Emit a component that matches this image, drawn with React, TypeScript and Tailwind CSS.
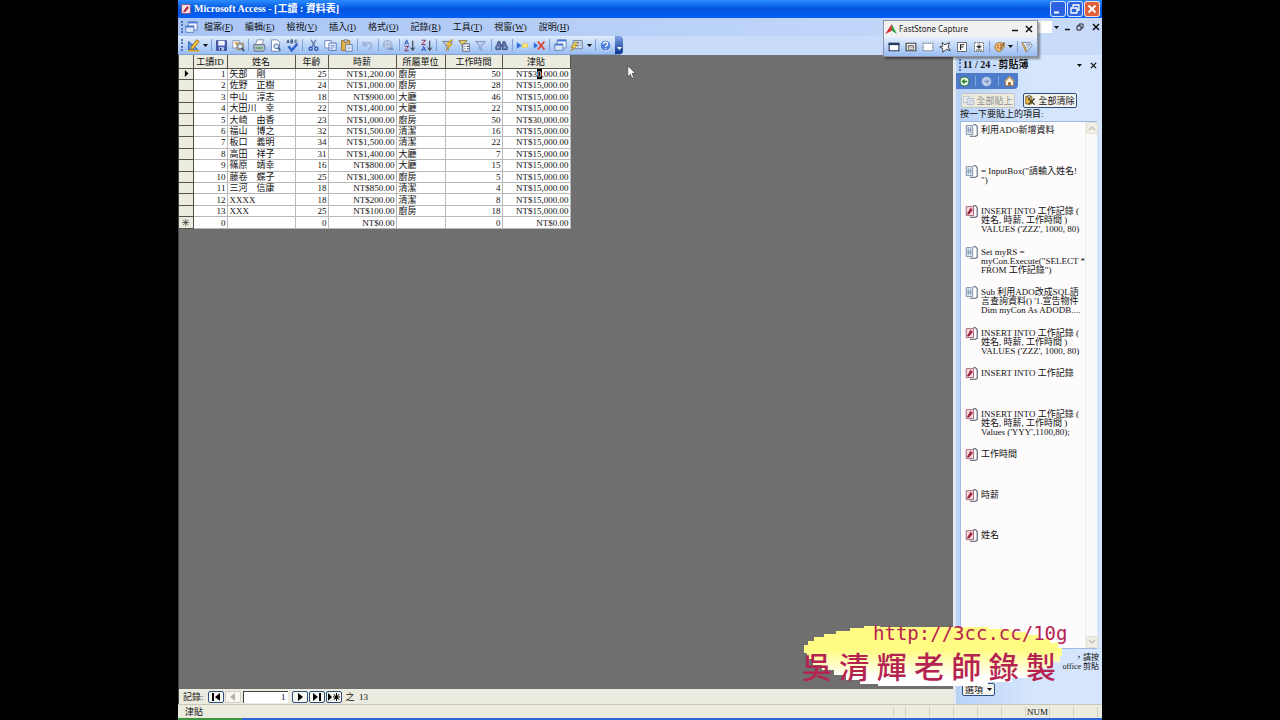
import React from 'react'
import { clsx } from 'clsx'

const MENUS = [
  ['檔案', 'F'],
  ['編輯', 'E'],
  ['檢視', 'V'],
  ['插入', 'I'],
  ['格式', 'O'],
  ['記錄', 'R'],
  ['工具', 'T'],
  ['視窗', 'W'],
  ['說明', 'H'],
]

const TOOLS = [
  'design', 'arrow', '|', 'save', 'search', '|', 'print', 'preview', 'spell', '|', 'cut', 'copy', 'paste', '|',
  'undo', '|', 'link', '|', 'asc', 'desc', '|', 'filterSel', 'filterForm', 'filter', '|', 'find', '|',
  'newRec', 'delRec', '|', 'database', 'newObj', 'arrow', '|', 'help',
]

const COLUMNS = ['工讀ID', '姓名', '年齡', '時薪', '所屬單位', '工作時間', '津貼']

const ROWS = [
  ['1', '矢部　剛', '25', 'NT$1,200.00', '廚房', '50', 'NT$30,000.00'],
  ['2', '佐野　正樹', '24', 'NT$1,000.00', '廚房', '28', 'NT$15,000.00'],
  ['3', '中山　淳志', '18', 'NT$900.00', '大廳', '46', 'NT$15,000.00'],
  ['4', '大田川　幸', '22', 'NT$1,400.00', '大廳', '22', 'NT$15,000.00'],
  ['5', '大崎　由香', '23', 'NT$1,000.00', '廚房', '50', 'NT$30,000.00'],
  ['6', '福山　博之', '32', 'NT$1,500.00', '清潔', '16', 'NT$15,000.00'],
  ['7', '板口　義明', '34', 'NT$1,500.00', '清潔', '22', 'NT$15,000.00'],
  ['8', '高田　祥子', '31', 'NT$1,400.00', '大廳', '7', 'NT$15,000.00'],
  ['9', '篠原　靖幸', '16', 'NT$800.00', '大廳', '15', 'NT$15,000.00'],
  ['10', '藤卷　蝶子', '25', 'NT$1,300.00', '廚房', '5', 'NT$15,000.00'],
  ['11', '三河　信康', '18', 'NT$850.00', '清潔', '4', 'NT$15,000.00'],
  ['12', 'XXXX', '18', 'NT$200.00', '清潔', '8', 'NT$15,000.00'],
  ['13', 'XXX', '25', 'NT$100.00', '廚房', '18', 'NT$15,000.00'],
  ['0', '', '0', 'NT$0.00', '', '0', 'NT$0.00'],
]

const CLIPS = [
  { app: 'word', lines: ['利用ADO新增資料'] },
  { app: 'word', lines: ['= InputBox("請輸入姓名!', '")'] },
  { app: 'access', lines: ['INSERT INTO 工作記錄 (', '姓名, 時薪, 工作時間 )', "VALUES ('ZZZ', 1000, 80)"] },
  { app: 'word', lines: ['Set myRS =', 'myCon.Execute("SELECT *', 'FROM 工作記錄")'] },
  { app: 'word', lines: ['Sub 利用ADO改成SQL語', "言查詢資料() '1.宣告物件", 'Dim myCon As ADODB....'] },
  { app: 'access', lines: ['INSERT INTO 工作記錄 (', '姓名, 時薪, 工作時間 )', "VALUES ('ZZZ', 1000, 80)"] },
  { app: 'access', lines: ['INSERT INTO 工作記錄'] },
  { app: 'access', lines: ['INSERT INTO 工作記錄 (', '姓名, 時薪, 工作時間 )', "Values ('YYY',1100,80);"] },
  { app: 'access', lines: ['工作時間'] },
  { app: 'access', lines: ['時薪'] },
  { app: 'access', lines: ['姓名'] },
]

const sheet = <path d="M3 1h7l3 3v11H3z" fill="#fff" stroke="#5c78a8" />
const funnel = 'M2 3h12l-5 6v5l-2-2V9z'

const ICONS: Record<string, React.ReactNode> = {
  design: (
    <>
      <path d="M2 3v11h12z" fill="#5b9ae8" stroke="#1d4fa0" />
      <path d="M4.500 9v3h3z" fill="#dcebff" />
      <path d="M5 10l7-9 3 2-7 9-3 1z" fill="#f6c643" stroke="#8a5a14" />
      <path d="M1 14.500h14" stroke="#d9a520" strokeWidth="2" />
    </>
  ),
  save: (
    <>
      <path d="M2 2h12v12H2z" fill="#4a62b8" stroke="#26367c" />
      <path d="M4 2h8v6H4z" fill="#f3f6ff" />
      <path d="M5 10h6v4H5z" fill="#c9d3ee" />
      <path d="M6 11h2v3H6z" fill="#26367c" />
    </>
  ),
  search: (
    <>
      <path d="M1 2h8v9H1z" fill="#fff" stroke="#7d8fb5" />
      <path d="M3 4h4M3 6h4" stroke="#d8912c" />
      <path d="M6 5h8v8H6z" fill="#f4dca0" stroke="#8a7a4a" />
      <circle cx="10" cy="9" r="3" fill="#dff0ff" stroke="#4a5f8c" />
      <path d="M12 11l3 4" stroke="#3c4f7c" strokeWidth="2" />
    </>
  ),
  print: (
    <>
      <path d="M5 1h8l-2 6H3z" fill="#fff" stroke="#6f7f9b" />
      <path d="M1 7h13l1 5-2 3H2l-1-3z" fill="#b9c3cf" stroke="#4f5f78" />
      <path d="M3 11h9" stroke="#4fa354" strokeWidth="2" />
    </>
  ),
  preview: (
    <>
      {sheet}
      <circle cx="9" cy="9" r="3" fill="#cfe6fb" stroke="#3d5b93" />
      <path d="M11 11l3 3" stroke="#3d5b93" strokeWidth="2" />
    </>
  ),
  spell: (
    <>
      <path d="M1 5l1.500-4L4 5M1.500 4h2M6 1v4h2V3H6h2V1zM14 1.500h-3v3h3" fill="none" stroke="#33406b" />
      <path d="M3 9l4 5 7-8" fill="none" stroke="#3563c9" strokeWidth="3" />
    </>
  ),
  cut: (
    <>
      <path d="M5 1l5 9M11 1L6 10" stroke="#5670a8" strokeWidth="1.500" />
      <circle cx="4.500" cy="12" r="2" fill="none" stroke="#2d51a8" strokeWidth="1.500" />
      <circle cx="11.500" cy="12" r="2" fill="none" stroke="#2d51a8" strokeWidth="1.500" />
    </>
  ),
  copy: (
    <>
      <path d="M1 2h8v9H1z" fill="#fff" stroke="#5775b5" />
      <path d="M6 5h9v9H6z" fill="#e8f0ff" stroke="#4263ac" />
      <path d="M8 8h5M8 10h5M8 12h3" stroke="#6d8acb" />
    </>
  ),
  paste: (
    <>
      <path d="M2 2h10v12H2z" fill="#e8b44a" stroke="#8a6118" />
      <path d="M5 1h4v3H5z" fill="#d8dce6" stroke="#666" />
      <path d="M7 7h8v8H7z" fill="#f5f9ff" stroke="#4c68a6" />
      <path d="M9 10h4M9 12h4" stroke="#7d98cf" />
    </>
  ),
  undo: <path d="M3 3v5h5M3 8c3-5 10-4 10 0 0 2-1 4-4 5" fill="none" stroke="#9aaed8" strokeWidth="2" />,
  link: (
    <>
      <circle cx="7" cy="7" r="5.500" fill="#c3d2ea" stroke="#92a6cd" />
      <path d="M2 7h10M7 2v10M4 3q-2 4 0 8M10 3q2 4 0 8" fill="none" stroke="#9eb2d6" />
      <path d="M8 12h6" stroke="#7f96c2" strokeWidth="3" />
    </>
  ),
  asc: (
    <>
      <path d="M2 7l2.500-6L7 7M3 5h3" fill="none" stroke="#2c56b8" strokeWidth="1.200" />
      <path d="M2 9h5l-5 5.500h5" fill="none" stroke="#8e2c4c" strokeWidth="1.200" />
      <path d="M12 2v11M9.500 10.500L12 14l2.500-3.500" fill="none" stroke="#26282e" strokeWidth="1.200" />
    </>
  ),
  desc: (
    <>
      <path d="M2 1.500h5L2 7h5" fill="none" stroke="#8e2c4c" strokeWidth="1.200" />
      <path d="M2 15l2.500-6L7 15M3 13h3" fill="none" stroke="#2c56b8" strokeWidth="1.200" />
      <path d="M12 2v11M9.500 10.500L12 14l2.500-3.500" fill="none" stroke="#26282e" strokeWidth="1.200" />
    </>
  ),
  filterSel: (
    <>
      <path d={funnel} fill="#c6cedd" stroke="#5e6c8a" />
      <path d="M12 1L6 8h4l-4 7 8-9h-4l4-5z" fill="#f9cf3f" stroke="#b98513" strokeWidth=".7" />
    </>
  ),
  filterForm: (
    <>
      <path d="M1 2h10L7 7v4L5 9V7z" fill="#f1d266" stroke="#766a3c" />
      <path d="M6 6h8v9H6z" fill="#fff" stroke="#41506f" />
      <path d="M8 9h1M11 9h2M8 12h1M11 12h2" stroke="#222c48" strokeWidth="1.500" />
    </>
  ),
  filter: <path d={funnel} fill="#b9cbea" stroke="#7189b9" />,
  find: (
    <>
      <path d="M2 8l2-5h2l1 4v6H1v-4zM14 8l-2-5h-2L9 7v6h6v-4z" fill="#6179b3" stroke="#33466f" />
      <path d="M7 7h2v2H7z" fill="#33466f" />
      <path d="M3 10h2M11 10h2" stroke="#d5e0f5" />
    </>
  ),
  newRec: (
    <>
      <path d="M1 4l6 4-6 4z" fill="#2f6ae0" />
      <path d="M8 6h6v4H8z" fill="#fff19a" stroke="#e8c522" />
    </>
  ),
  delRec: (
    <>
      <path d="M1 4l5 4-5 4z" fill="#2f6ae0" />
      <path d="M6 3l8 10M14 3L6 13" stroke="#e13a2b" strokeWidth="2" />
    </>
  ),
  database: (
    <>
      <path d="M4 1h11v10H4z" fill="#eef5ff" stroke="#5577b5" />
      <path d="M4 2h11" stroke="#4a78d2" strokeWidth="2" />
      <path d="M1 6h10v8H1z" fill="#dbe7fa" stroke="#5577b5" />
      <path d="M1 7h10" stroke="#4a78d2" strokeWidth="2" />
    </>
  ),
  newObj: (
    <>
      <path d="M4 2h11v10H4z" fill="#dfe9f8" stroke="#54698f" />
      <path d="M7 5h7M7 8h7M10 3v8" stroke="#8398bd" />
      <path d="M6 4L1 10h3l-3 5 8-7H6l4-4z" fill="#f5d96b" stroke="#a17f1d" />
    </>
  ),
  help: (
    <>
      <circle cx="8" cy="8" r="6.500" fill="#4c80dd" stroke="#dbe7fa" />
      <path d="M5.500 6.500c0-4 5.500-3 5 0-.3 1.500-2.500 1.500-2.500 3.200M8 11.500v1" fill="none" stroke="#fff" strokeWidth="1.600" />
    </>
  ),
  clear: (
    <>
      <path d="M1 2h9v11H1z" fill="#e5b447" stroke="#6e5219" />
      <path d="M4 1h4v3H4z" fill="#ddd" stroke="#555" />
      <path d="M5 5l9 9M14 5l-9 9" stroke="#333b20" strokeWidth="2" />
    </>
  ),
  word: (
    <>
      <path d="M10 1h3l2 2v11l-2 1H6" fill="#fff" stroke="#55657a" strokeWidth="1.300" />
      <path d="M1.500 2h8v11h-8z" fill="#dde7f1" stroke="#71849b" />
      <path d="M4 4v7M7 4v7M3 7.500h5" stroke="#6e87a8" />
    </>
  ),
  access: (
    <>
      <path d="M10 1h3l2 2v11l-2 1H6" fill="#fff" stroke="#4a5365" strokeWidth="1.300" />
      <path d="M1.500 2h9v11h-9z" fill="#f5dce2" stroke="#9a4c61" />
      <path d="M3 11l4-7 2 2-4 5z" fill="#b3213f" stroke="#8a1a32" />
    </>
  ),
  accessApp: (
    <>
      <path d="M1 1h14v14H1z" fill="#f7e5e8" stroke="#a8364f" />
      <path d="M4 12l6-8 2 2-5 6z" fill="#c42045" stroke="#92152f" />
    </>
  ),
  screen: (
    <>
      <path d="M1.500 3h13v10h-13z" fill="#fff" stroke="#26385c" strokeWidth="1.500" />
      <path d="M1 4h14" stroke="#26385c" strokeWidth="3" />
    </>
  ),
  object: (
    <>
      <path d="M1.500 3h13v10h-13z" fill="#eee" stroke="#444" strokeWidth="1.500" />
      <path d="M4.500 6h7v5h-7zM4 8h8" fill="#fff" stroke="#555" />
    </>
  ),
  rect: <path d="M1.500 3h13v10h-13z" fill="#fff" stroke="#444" strokeDasharray="2 1" />,
  free: <path d="M4 2l4 3 6-3-2 6 3 5-5-2-5 4v-5L1 8l4-1z" fill="#fff" stroke="#333" strokeWidth="1.200" />,
  full: (
    <>
      <path d="M2 2h12v12H2z" fill="#fff" stroke="#444" />
      <path d="M6 12V5h5M6 8h4" fill="none" stroke="#222" strokeWidth="1.500" />
    </>
  ),
  scroll: (
    <>
      <path d="M2 2h12v12H2z" fill="#fff" stroke="#444" strokeDasharray="2 1" />
      <path d="M8 3v4M5 7h6l-3 3zM4 12h8" fill="#222" stroke="#222" />
    </>
  ),
  palette: (
    <>
      <path d="M8 2C2 2 0 7 2 11s7 4 8 1 4-2 4-5-3-5-6-5z" fill="#f0c477" stroke="#84592a" />
      <path d="M4 6h2M8 5h2M4 9h2" stroke="#c4552a" strokeWidth="2" />
      <path d="M8 11l6-9" stroke="#8a6a3c" strokeWidth="2" />
    </>
  ),
  output: (
    <>
      <path d="M1 2h11l3 4-8 9z" fill="#dde5f0" stroke="#5b6d8d" />
      <path d="M4 5l4 8M7 5h5l-4 4" fill="none" stroke="#5b6d8d" />
      <path d="M2 3l5 11" stroke="#d2933a" strokeWidth="2" />
    </>
  ),
  home: (
    <>
      <path d="M2 8l6-6 6 6v6H2z" fill="#fff5e0" stroke="#8b5b2d" />
      <path d="M1 8l7-7 7 7" fill="none" stroke="#c9a06b" strokeWidth="2" />
      <path d="M6 9h4v5H6z" fill="#a4632f" />
    </>
  ),
  back: (
    <>
      <circle cx="8" cy="8" r="6.500" fill="#f4fbef" stroke="#2c7a35" strokeWidth="1.500" />
      <path d="M12 8H5M8 5L5 8l3 3" fill="none" stroke="#257b2e" strokeWidth="2" />
    </>
  ),
  forward: (
    <>
      <circle cx="8" cy="8" r="6.500" fill="#c5d3ef" stroke="#a1b4dc" strokeWidth="1.500" />
      <path d="M4 8h7M8 5l3 3-3 3" fill="none" stroke="#8299c6" strokeWidth="2" />
    </>
  ),
}

const Icon = ({ name, className = 'size-3' }: { name: string; className?: string }) => (
  <svg viewBox="0 0 16 16" className={clsx('shrink-0', className)} aria-hidden="true">
    {ICONS[name]}
  </svg>
)

const Caret = () => (
  <svg viewBox="0 0 7 4" className="h-[3px] w-[5px] shrink-0" aria-hidden="true">
    <path d="M0 0h7L3.500 4z" fill="#111" />
  </svg>
)

const Grip = () => <span className="h-3 w-0 shrink-0 border-l-2 border-dotted border-[#5576b8]" />

const TitleBar = () => (
  <header className="flex h-[18px] shrink-0 items-center gap-[3px] bg-linear-to-b from-[#2b8bff] via-[#0353e0] to-[#0560f5] pr-[2px] pl-[3px]">
    <Icon name="accessApp" className="size-[10px]" />
    <h1 className="flex-1 text-[10px] leading-3 font-bold whitespace-pre text-white">Microsoft Access - [工讀 : 資料表]</h1>
    <div className="flex gap-px">
      <button aria-label="最小化" className="size-4 rounded-[3px] border border-white/80 bg-[#2d62e0]">
        <svg viewBox="0 0 14 14"><path d="M3 10.500h5" stroke="#fff" strokeWidth="2" /></svg>
      </button>
      <button aria-label="還原" className="size-4 rounded-[3px] border border-white/80 bg-[#2d62e0]">
        <svg viewBox="0 0 14 14"><path d="M5 5V3h6v5H9M3 6h6v5H3z" fill="none" stroke="#fff" strokeWidth="1.300" /></svg>
      </button>
      <button aria-label="關閉" className="size-4 rounded-[3px] border border-white/80 bg-[#e0603c]">
        <svg viewBox="0 0 14 14"><path d="M3.500 3.500l7 7M10.500 3.500l-7 7" stroke="#fff" strokeWidth="2" /></svg>
      </button>
    </div>
  </header>
)

const MenuBar = () => (
  <nav className="flex h-[18px] shrink-0 items-center bg-linear-to-r from-[#a9c5f5] to-[#c8dbfa] pr-[2px] pl-[3px]">
    <Grip />
    <Icon name="database" className="mr-[6px] ml-[2px] size-[13px]" />
    <div className="flex flex-1 gap-3">
      {MENUS.map(([label, key]) => (
        <button key={key} className="whitespace-nowrap">
          {label}(<u>{key}</u>)
        </button>
      ))}
    </div>
    <div className="flex h-3 items-center gap-1">
      <span className="flex h-3 w-6 items-center justify-end bg-white">
        <span className="flex h-3 w-2 items-center justify-center bg-[#c8dbfa]"><Caret /></span>
      </span>
      <button aria-label="最小化視窗">
        <svg viewBox="0 0 8 8" className="size-2"><path d="M1 6.500h5" stroke="#111" strokeWidth="1.500" /></svg>
      </button>
      <button aria-label="還原視窗">
        <svg viewBox="0 0 8 8" className="size-2"><path d="M3 3V1h4v4H5M1 3h4v4H1z" fill="none" stroke="#222" /></svg>
      </button>
      <button aria-label="關閉視窗" className="ml-1">
        <svg viewBox="0 0 8 8" className="size-2"><path d="M1 1l6 6M7 1L1 7" stroke="#111" strokeWidth="1.500" /></svg>
      </button>
    </div>
  </nav>
)

const Toolbar = () => (
  <div className="flex h-[19px] shrink-0 bg-[#c8dbfa]">
    <div className="flex w-[445px] items-center overflow-hidden rounded-r-sm border-b border-[#7f9fd0] bg-linear-to-b from-[#dfecfd] to-[#9abdf2] pl-[3px]">
      <Grip />
      <div className="ml-[2px] flex w-[429px] items-center justify-between">
        {TOOLS.map((tool, i) => {
          if (tool === '|') return <span key={i} className="flex w-1 justify-center"><i className="h-3 w-px bg-[#7f9fd6]" /></span>
          if (tool === 'arrow') return <button key={i} aria-label="更多" className="flex w-[7px] justify-center"><Caret /></button>
          return (
            <button key={i} aria-label={tool} className="flex w-4 justify-center">
              <Icon name={tool} className="size-[13px]" />
            </button>
          )
        })}
      </div>
      <button aria-label="工具列選項" className="ml-auto flex h-full w-2 items-end justify-center bg-linear-to-b from-[#7fa3e6] to-[#08358f] pb-1">
        <svg viewBox="0 0 7 4" className="h-[3px] w-[5px]"><path d="M0 0h7L3.500 4z" fill="#fff" /></svg>
      </button>
    </div>
  </div>
)

const DataSheet = () => (
  <table className="h-[174px] w-[391px] table-fixed border-collapse bg-white">
    <colgroup>
      <col className="w-[14px]" />
      <col className="w-[34px]" />
      <col className="w-[68px]" />
      <col className="w-[33px]" />
      <col className="w-[68px]" />
      <col className="w-[49px]" />
      <col className="w-[57px]" />
      <col className="w-[68px]" />
    </colgroup>
    <thead>
      <tr className="h-[13px] bg-[#ebebdf] leading-[10px]">
        <td className="border-r border-b border-[#55534a] p-0" />
        {COLUMNS.map((name) => (
          <th key={name} scope="col" className="border-r border-b border-[#55534a] px-0 pt-px pb-0 font-normal">{name}</th>
        ))}
      </tr>
    </thead>
    <tbody>
      {ROWS.map((row, i) => (
        <tr key={i} className="leading-[10px]">
          <td className="border-r border-b border-[#55534a] bg-[#ebebdf] p-0">
            {i === 0 && <svg viewBox="0 0 14 10" className="h-[9px] w-full"><path d="M6 1l4 4-4 4z" /></svg>}
            {i === 13 && (
              <svg viewBox="0 0 14 10" className="h-[9px] w-full"><path d="M7 1v8M3 5h8M4 2l6 6M10 2L4 8" stroke="#333" strokeWidth=".8" /></svg>
            )}
          </td>
          {row.map((value, c) => (
            <td key={c} className={clsx('border-r border-b border-[#b9b9b9] py-0 pr-px pl-[2px] whitespace-nowrap', c === 1 || c === 4 ? 'text-left' : 'text-right')}>
              {i === 0 && c === 6 ? <>NT$3<mark className="bg-black text-white">0</mark>,000.00</> : value}
            </td>
          ))}
        </tr>
      ))}
    </tbody>
  </table>
)

const NAV_SHAPES: Record<string, string> = {
  第一筆: 'M3 1v8h2V1zM11 1v8L6 5z',
  上一筆: 'M9 1v8L4 5z',
  下一筆: 'M5 1v8l5-4z',
  最後一筆: 'M3 1v8l5-4zM9 1v8h2V1z',
  新記錄: 'M1 1v8l4-4zM9 1h1v8H9zM6 4.500h7v1H6zM7 2l5.500 5.500-.6.6L6.400 2.600zM12.500 2.600L7 8.100l-.6-.6L11.900 2z',
}

const NavButton = ({ name, off }: { name: string; off?: boolean }) => (
  <button
    aria-label={name}
    disabled={off}
    className={clsx('flex h-3 w-4 items-center justify-center rounded-[2px] border bg-[#f7f6f0]', off ? 'border-[#d0cdbd]' : 'border-[#2c4f80]')}
  >
    <svg viewBox="0 0 14 10" className="h-[10px] w-[14px] shrink-0"><path d={NAV_SHAPES[name]} fill={off ? '#b5b3a6' : '#000'} /></svg>
  </button>
)

const RecordNav = () => (
  <div className="mt-auto flex h-[15px] shrink-0 items-center bg-[#ebebdf] pl-1">
    <label htmlFor="record" className="mr-1">記錄:</label>
    <NavButton name="第一筆" />
    <span className="ml-px"><NavButton name="上一筆" off /></span>
    <input id="record" defaultValue="1" className="mr-1 ml-[2px] h-3 w-[45px] border-t border-l border-[#444] bg-white pr-[2px] text-right" />
    <NavButton name="下一筆" />
    <span className="ml-px"><NavButton name="最後一筆" /></span>
    <span className="ml-px"><NavButton name="新記錄" /></span>
    <span className="ml-1 whitespace-pre">之  13</span>
  </div>
)

const ClipboardPane = () => (
  <aside className="flex w-[149px] shrink-0 flex-col border-l-3 border-[#e4e8ee] bg-linear-to-r from-[#b8d2f8] via-[#d5e5fc] to-[#d5e5fc] px-[3px] pt-[2px] pb-2">
    <div className="-mx-[3px] flex h-4 items-center pr-[5px] pl-[3px]">
      <Grip />
      <h2 className="ml-[2px] flex-1 text-[10px] leading-3 font-bold">11 / 24 - 剪貼簿</h2>
      <button aria-label="其他工作窗格" className="mr-2"><Caret /></button>
      <button aria-label="關閉窗格">
        <svg viewBox="0 0 8 8" className="size-[7px]"><path d="M1 1l6 6M7 1L1 7" stroke="#111" strokeWidth="1.500" /></svg>
      </button>
    </div>
    <div className="-ml-[3px] flex h-4 w-[62px] items-center justify-around rounded-br-sm bg-[#4d7ac9]">
      <button aria-label="上一頁"><Icon name="back" className="size-[11px]" /></button>
      <i className="h-[10px] w-px bg-[#86a8e2]" />
      <button aria-label="下一頁"><Icon name="forward" className="size-[11px]" /></button>
      <i className="h-[10px] w-px bg-[#86a8e2]" />
      <button aria-label="首頁"><Icon name="home" className="size-[11px]" /></button>
    </div>
    <div className="mt-1 flex gap-2 pl-[2px]">
      <button disabled className="flex h-[15px] w-[54px] items-center justify-center gap-[2px] rounded-[2px] border border-[#c2c6c4] bg-[#eceadf] whitespace-nowrap text-[#8f8f88]">
        <Icon name="copy" className="size-[11px] opacity-50" />全部貼上
      </button>
      <button className="flex h-[15px] w-[54px] items-center justify-center gap-[2px] rounded-[2px] border border-[#2c4f80] bg-[#f4f3ed] whitespace-nowrap">
        <Icon name="clear" className="size-[11px]" />全部清除
      </button>
    </div>
    <p className="pl-px">按一下要貼上的項目:</p>
    <div className="mt-px mr-[2px] ml-px flex flex-1 border border-[#9db9e4] bg-[#fdfbfc]">
      <ul className="flex h-[448px] flex-1 flex-col pt-[2px] pl-1">
        {CLIPS.map((clip, i) => (
          <li key={i} className="flex-1">
            <button className="flex items-start gap-[3px] text-left">
              <Icon name={clip.app} className="size-[13px]" />
              <span className="pt-[2px] leading-[9px]">
                {clip.lines.map((line) => (
                  <span key={line} className="block whitespace-pre">{line}</span>
                ))}
              </span>
            </button>
          </li>
        ))}
      </ul>
      <div className="flex w-3 flex-col justify-between border-l border-[#eeeeea] bg-[#fbfaf8]">
        <button aria-label="向上捲動" className="flex size-3 items-center justify-center rounded-[2px] border border-[#e0dfd5] bg-[#f0efe6]">
          <svg viewBox="0 0 8 8" className="size-2"><path d="M1 6l3-3 3 3" fill="none" stroke="#c5c3b8" strokeWidth="1.500" /></svg>
        </button>
        <button aria-label="向下捲動" className="flex size-3 items-center justify-center rounded-[2px] border border-[#e0dfd5] bg-[#f0efe6]">
          <svg viewBox="0 0 8 8" className="size-2"><path d="M1 2l3 3 3-3" fill="none" stroke="#c5c3b8" strokeWidth="1.500" /></svg>
        </button>
      </div>
    </div>
    <div className="mt-1 h-[30px] text-right text-[8px] leading-[9px]">
      <p>，請按</p>
      <p>office 剪貼</p>
    </div>
    <button className="ml-[3px] flex h-[13px] w-[33px] items-center justify-center gap-1 rounded-[2px] border border-[#2c4f80] bg-[#f4f3ed]">
      選項 <Caret />
    </button>
  </aside>
)

const CAPTURE_TOOLS = ['screen', 'object', 'rect', 'free', 'full', 'scroll']

const CaptureWindow = () => (
  <section className="absolute top-5 right-16 w-[155px] border border-[#8b95a5] bg-[#f1f1f1] shadow-[2px_2px_2px_rgba(0,0,0,0.4)]">
    <div className="flex h-4 items-center gap-[2px] pr-1 pl-px">
      <svg viewBox="0 0 14 12" className="h-[10px] w-3 shrink-0" aria-hidden="true">
        <path d="M8 0v8l-8 4z" fill="#d8262e" />
        <path d="M8 0l6 12-6-4z" fill="#2c9c46" />
      </svg>
      <h2 className="flex-1 font-['Noto_Sans'] text-[8px] leading-3 text-[#222]">FastStone Capture</h2>
      <button aria-label="縮小">
        <svg viewBox="0 0 8 8" className="mr-1 size-2"><path d="M1 5.500h6" stroke="#111" strokeWidth="1.500" /></svg>
      </button>
      <button aria-label="結束">
        <svg viewBox="0 0 8 8" className="size-2"><path d="M1 1l6 6M7 1L1 7" stroke="#111" strokeWidth="1.500" /></svg>
      </button>
    </div>
    <div className="flex h-[19px] items-center bg-linear-to-b from-[#e4effe] to-[#9abdf2] px-1">
      <div className="flex gap-[5px]">
        {CAPTURE_TOOLS.map((name) => (
          <button key={name} aria-label={name}><Icon name={name} /></button>
        ))}
      </div>
      <i className="mx-1 h-3 w-px bg-[#7f9fd6]" />
      <button aria-label="palette" className="flex items-center gap-[2px]"><Icon name="palette" /><Caret /></button>
      <i className="mx-1 h-3 w-px bg-[#7f9fd6]" />
      <button aria-label="output"><Icon name="output" /></button>
    </div>
  </section>
)

const Watermark = () => (
  <div className="absolute right-9 bottom-8 h-[66px] w-[264px]">
    <svg viewBox="0 0 264 66" className="absolute inset-0" aria-hidden="true">
      <defs>
        <linearGradient id="glow" x1="0" y1="0" x2="0" y2="1">
          <stop offset="0.400" stopColor="#fffb83" />
          <stop offset="0.850" stopColor="#fff" />
        </linearGradient>
      </defs>
      <path
        d="M78 5h109v2h22v3h15v3h12v4h12v4h8v5h4v8h-2v6h-8v6h-8v5h-14v5h-18v4h-24v4H76v-2H58v-4H44v-5H32v-5H20v-5H11v-6H5v-6H2v-8h4v-4h6v-4h10v-3h12v-3h14v-3h14v-2h16z"
        fill="url(#glow)"
      />
    </svg>
    <div className="relative font-['DejaVu_Sans_Mono','Noto_Sans_CJK_TC',monospace] text-[#b52450]">
      <p className="pl-[71px] text-[19px] leading-[22px] whitespace-nowrap">http://3cc.cc/10g</p>
      <p className="flex w-[254px] justify-between pt-2 text-[30px] leading-8 font-medium">
        {[...'吳清輝老師錄製'].map((ch) => (
          <span key={ch}>{ch}</span>
        ))}
      </p>
    </div>
  </div>
)

const StatusBar = () => (
  <footer className="flex h-[14px] shrink-0 items-center border-t border-[#c9c6b6] bg-[#ebebdf] pl-[7px]">
    <span className="flex-1">津貼</span>
    <div className="flex h-[10px] items-center pr-1 leading-[10px]">
      {['', '', '', '', '', '', '', 'NUM', '', ''].map((text, i) => (
        <span key={i} className={clsx('h-[10px] border-r border-[#d3d1c3] text-center', i < 2 ? 'w-3' : 'w-6')}>{text}</span>
      ))}
    </div>
  </footer>
)

export default function App() {
  return (
    <div className="h-screen overflow-hidden bg-black px-[178px]">
      <div className="relative flex h-full flex-col bg-[#c8dbfa] font-['Liberation_Serif','Noto_Sans_CJK_TC',serif] text-[9px] leading-3 text-[#111]">
        <TitleBar />
        <MenuBar />
        <Toolbar />
        <div className="flex min-h-0 flex-1">
          <main className="flex flex-1 flex-col border-l border-[#444] bg-[#6f6f6f]">
            <DataSheet />
            <RecordNav />
          </main>
          <ClipboardPane />
        </div>
        <StatusBar />
        <div className="flex h-[2px] shrink-0 bg-[#2f63d8]">
          <span className="h-full w-16 bg-[#3f9440]" />
        </div>
        <CaptureWindow />
        <Watermark />
        <svg viewBox="0 0 12 18" className="absolute top-[65px] left-[449px] h-[15px] w-[10px]" aria-hidden="true">
          <path d="M1 1v13l3-3 2 5 2-1-2-5h4z" fill="#fff" stroke="#222" strokeWidth=".6" />
        </svg>
      </div>
    </div>
  )
}
